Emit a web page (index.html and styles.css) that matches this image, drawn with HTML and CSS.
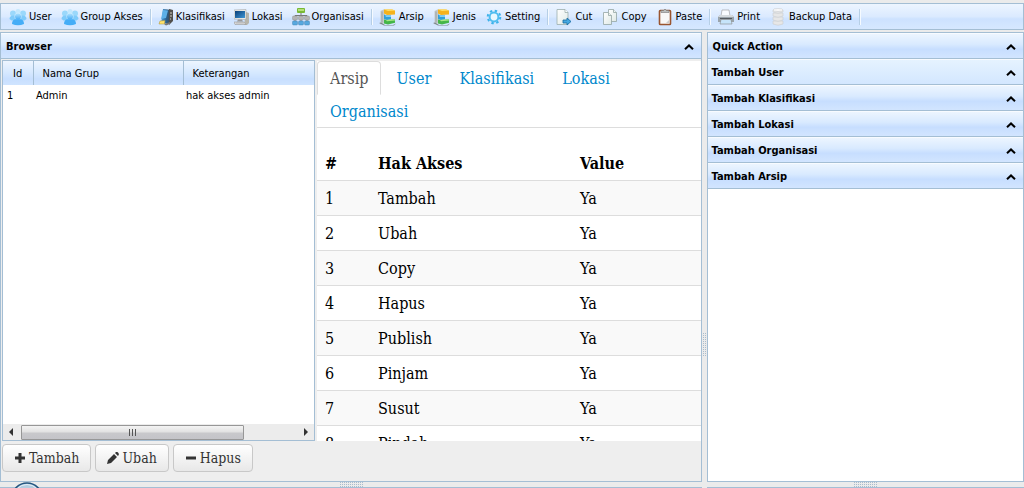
FILE: index.html
```html
<!DOCTYPE html>
<html lang="id">
<head>
<meta charset="utf-8">
<title>Group Akses</title>
<link rel="stylesheet" href="styles.css">
</head>
<body>
<svg class="defs" aria-hidden="true">
  <defs>
    <linearGradient id="gBlue" x1="0" y1="0" x2="0" y2="1"><stop offset="0" stop-color="#b9e6ff"/><stop offset="1" stop-color="#3fa9f5"/></linearGradient>
    <linearGradient id="gSteel" x1="0" y1="0" x2="1" y2="0"><stop offset="0" stop-color="#4ba0dc"/><stop offset=".5" stop-color="#2a5f8e"/><stop offset="1" stop-color="#444"/></linearGradient>
    <linearGradient id="gPage" x1="0" y1="0" x2="1" y2="1"><stop offset="0" stop-color="#fff"/><stop offset="1" stop-color="#dfe9e6"/></linearGradient>
    <linearGradient id="gScreen" x1="0" y1="0" x2="1" y2="1"><stop offset="0" stop-color="#0a3f78"/><stop offset="1" stop-color="#3f97d6"/></linearGradient>
    <symbol id="users" viewBox="0 0 18 18">
      <circle cx="4" cy="5.500" r="3" fill="#9ad8fb"/><circle cx="14" cy="5.500" r="3" fill="#9ad8fb"/><circle cx="9" cy="3.500" r="2.500" fill="#c3e8fd"/>
      <path d="M.5 11q0-3.500 4-3.500h9q4 0 4 3.500l-2 1.500h-13z" fill="#7fcbfa"/>
      <circle cx="9" cy="8.500" r="3.500" fill="url(#gBlue)" stroke="#d9f1ff" stroke-width=".5"/>
      <path d="M3 16q0-4.500 4-4.700h4q4 .2 4 4.700-6 2.500-12 0z" fill="#45adf7"/>
    </symbol>
    <symbol id="cabinet" viewBox="0 0 18 18">
      <path d="M1.500 3l4-2v14l-4 1.500z" fill="#c3cacb"/><path d="M3 3.500v11" stroke="#8f989a" stroke-width=".8"/>
      <path d="M0 15l2-.5 4 2.500h8l3-1.500-2 2H5z" fill="#7f8789"/>
      <path d="M5 1.500h8l3 1v4l-8 .5-3-1.500z" fill="#f5b21c"/><path d="M5 1.500h8l3 1-7 .5z" fill="#ffe066"/>
      <path d="M5 6.500l3 .8h4v4L8 12l-3-1z" fill="#2f9fdb"/><path d="M6 7.500h6v1.200H7z" fill="#9be0fb"/>
      <path d="M5 11.500l3 .5 8-.7v3.500L9 16.500l-4-1z" fill="#45b649"/><path d="M7 12l9-.8v1.300l-8 .8z" fill="#a7e884"/>
    </symbol>
    <symbol id="chevron" viewBox="0 0 10 6"><path d="M1 5.200L5 1.400l4 3.800" fill="none" stroke="#000" stroke-width="2"/></symbol>
  </defs>
</svg>

<nav class="toolbar" aria-label="Toolbar">
  <button type="button"><svg class="icon"><use href="#users"/></svg>User</button>
  <button type="button"><svg class="icon"><use href="#users"/></svg>Group Akses</button>
  <span class="sep"></span>
  <button type="button"><svg class="icon narrow" viewBox="1 0 16 18"><path d="M6 1l9 1-3 13-8 1z" fill="url(#gSteel)"/><path d="M12 1l4 1v11l-4 4z" fill="#51504d"/><path d="M6 2l5 .5L9 10l-5 1z" fill="#5cb0e8"/><path d="M13 5h2M13 8h2M13 11h1" stroke="#d4d0c5"/><path d="M2 16l1-3 5-.5-.5 3.500z" fill="#ffe36e" stroke="#a88d37" stroke-width=".5"/><path d="M7 16l6-2v2l-4 1.500z" fill="#777"/></svg>Klasifikasi</button>
  <button type="button"><svg class="icon narrow" viewBox="1 0 16 18"><path d="M13 4l3 1v10l-2 2h-3z" fill="#b8b6ac"/><path d="M1 2l12-.5v10L1 11z" fill="#eeeee8" stroke="#999" stroke-width=".5"/><path d="M2 3h10v7H2z" fill="url(#gScreen)"/><path d="M5 11.500h4l1 2H4z" fill="#999"/><path d="M1 14h10l2 2.500H2z" fill="#ddd" stroke="#999" stroke-width=".6"/><path d="M3 15h8" stroke="#aaa" stroke-width=".6"/></svg>Lokasi</button>
  <button type="button"><svg class="icon" viewBox="0 0 18 18"><path d="M9 5v3M3 9V7.500h12V9M3 11v3M9 9v5M15 11v3" stroke="#777" fill="none"/><rect x="5" y="0" width="8" height="5" rx="1" fill="#78b935"/><rect x="6" y="1" width="6" height="2" fill="#b5df78"/><g fill="#b4b4b4" stroke="#888" stroke-width=".4"><rect x=".5" y="8" width="5" height="4" rx="1"/><rect x="6.500" y="8" width="5" height="4" rx="1"/><rect x="12.500" y="8" width="5" height="4" rx="1"/></g><g fill="#57a8df" stroke="#3a78a8" stroke-width=".4"><rect x=".5" y="13" width="5" height="4" rx="1"/><rect x="6.500" y="13" width="5" height="4" rx="1"/><rect x="12.500" y="13" width="5" height="4" rx="1"/></g></svg>Organisasi</button>
  <span class="sep"></span>
  <button type="button"><svg class="icon"><use href="#cabinet"/></svg>Arsip</button>
  <button type="button"><svg class="icon"><use href="#cabinet"/></svg>Jenis</button>
  <button type="button"><svg class="icon" viewBox="0 0 18 18"><circle cx="9" cy="9" r="6.300" fill="none" stroke="#3db2ea" stroke-width="2" stroke-dasharray="2.400 2.548"/><circle cx="9" cy="9" r="4.400" fill="#e9f7ff" stroke="#50bdf0" stroke-width="2"/></svg>Setting</button>
  <span class="sep"></span>
  <button type="button"><svg class="icon" viewBox="0 0 18 18"><path d="M2 1.500h8l3 3v12H2z" fill="url(#gPage)" stroke="#9caead" stroke-width=".8"/><path d="M10 1.500v3h3" fill="#fff" stroke="#9caead" stroke-width=".8"/><path d="M8 12h4v-2l4 3.500-4 3.500v-2H8z" fill="#45a8e2" stroke="#176b9f" stroke-width=".8"/></svg>Cut</button>
  <button type="button"><svg class="icon" viewBox="0 0 18 18"><g fill="url(#gPage)" stroke="#94a6a5" stroke-width=".8"><path d="M7.500 1.500h5l3 3v9h-8z"/><path d="M12.500 1.500v3h3"/><path d="M2.500 4.500h5l3 3v9h-8z"/><path d="M7.500 4.500v3h3"/></g></svg>Copy</button>
  <button type="button"><svg class="icon" viewBox="0 0 18 18"><rect x="3.500" y="2.500" width="11" height="14" rx=".8" fill="#f8f8f7" stroke="#9a552f" stroke-width="1.600"/><path d="M5 4.500V2.500h2.500q1.500-3 3 0H13v2z" fill="#b9bdbc" stroke="#777" stroke-width=".6"/><path d="M13 12v3h-3z" fill="#ccc"/></svg>Paste</button>
  <span class="sep"></span>
  <button type="button"><svg class="icon" viewBox="0 0 18 18"><path d="M5 2h7l1 6H4z" fill="#f9fcff" stroke="#999" stroke-width=".6"/><path d="M3 7h12l2 2v5H1V9z" fill="#9aa4ab"/><path d="M3 7h12l2 2H1z" fill="#d5dadd"/><path d="M3 10.500h12" stroke="#555b5f"/><path d="M4 11.500h10l1 4.500H3z" fill="#c6e4fa" stroke="#888" stroke-width=".6"/></svg>Print</button>
  <button type="button"><svg class="icon" viewBox="0 0 18 18"><g fill="#e7e7e7" stroke="#c9ccd0" stroke-width=".6"><path d="M4 13v3q5 2.500 10 0v-3z"/><path d="M4 9v3q5 2.500 10 0V9z"/><path d="M4 5v3q5 2.500 10 0V5z"/><path d="M4 2v2q5 2.500 10 0V2z"/><ellipse cx="9" cy="2" rx="5" ry="1.500" fill="#f8f8f8"/></g></svg>Backup Data</button>
  <span class="sep"></span>
</nav>

<div class="workspace">
  <div class="column browser-col">
    <section class="panel">
      <header class="bar"><h2>Browser</h2><button type="button" aria-label="Ciutkan Browser"><svg class="chev"><use href="#chevron"/></svg></button></header>
      <div class="browser">
        <div class="group">
          <div class="grid-box">
            <table class="grid">
              <colgroup><col class="g-id"><col class="g-name"><col></colgroup>
              <thead><tr><th>Id</th><th>Nama Grup</th><th>Keterangan</th></tr></thead>
              <tbody><tr><td>1</td><td>Admin</td><td>hak akses admin</td></tr></tbody>
            </table>
            <div class="scroll" aria-hidden="true">
              <svg class="arrow" viewBox="0 0 4 8"><path d="M4 0v8L0 4z" fill="#333"/></svg>
              <div class="track"><div class="thumb"><i></i><i></i><i></i></div></div>
              <svg class="arrow" viewBox="0 0 4 8"><path d="M0 0v8l4-4z" fill="#333"/></svg>
            </div>
          </div>
        </div>
        <div class="access">
          <ul class="tabs">
            <li><a class="active" href="#arsip">Arsip</a></li>
            <li><a href="#user">User</a></li>
            <li><a href="#klasifikasi">Klasifikasi</a></li>
            <li><a href="#lokasi">Lokasi</a></li>
            <li><a href="#organisasi">Organisasi</a></li>
          </ul>
          <table class="rights">
            <colgroup><col class="r-no"><col class="r-name"><col></colgroup>
            <thead><tr><th>#</th><th>Hak Akses</th><th>Value</th></tr></thead>
            <tbody>
              <tr><td>1</td><td>Tambah</td><td>Ya</td></tr>
              <tr><td>2</td><td>Ubah</td><td>Ya</td></tr>
              <tr><td>3</td><td>Copy</td><td>Ya</td></tr>
              <tr><td>4</td><td>Hapus</td><td>Ya</td></tr>
              <tr><td>5</td><td>Publish</td><td>Ya</td></tr>
              <tr><td>6</td><td>Pinjam</td><td>Ya</td></tr>
              <tr><td>7</td><td>Susut</td><td>Ya</td></tr>
              <tr><td>8</td><td>Pindah</td><td>Ya</td></tr>
            </tbody>
          </table>
        </div>
      </div>
      <div class="actions">
        <button type="button"><svg viewBox="0 0 12 12"><path d="M6 1v10M1 6h10" stroke="#333" stroke-width="3"/></svg>Tambah</button>
        <button type="button"><svg viewBox="0 0 12 12"><path d="M0 12l1-4 6-6 3 3-6 6zM8 1l1-1q1-.5 2 .5t.8 2.200L11 4z" fill="#333"/></svg>Ubah</button>
        <button type="button"><svg viewBox="0 0 12 12"><path d="M1 6h10" stroke="#333" stroke-width="3"/></svg>Hapus</button>
      </div>
    </section>
    <div class="split-h"><span class="dots"></span><svg class="orb" viewBox="0 0 32 32"><circle cx="16" cy="16" r="15" fill="#b4cde0" stroke="#24557f" stroke-width="1.500"/><circle cx="16" cy="16" r="13.500" fill="none" stroke="#e4eff7"/></svg></div>
    <div class="next"></div>
  </div>
  <div class="split-v"><span class="dots"></span></div>
  <div class="column quick-col">
    <section class="panel quick">
      <header class="bar"><h2>Quick Action</h2><button type="button" aria-label="Ciutkan Quick Action"><svg class="chev"><use href="#chevron"/></svg></button></header>
      <button type="button" class="bar item first">Tambah User<svg class="chev"><use href="#chevron"/></svg></button>
      <button type="button" class="bar item">Tambah Klasifikasi<svg class="chev"><use href="#chevron"/></svg></button>
      <button type="button" class="bar item">Tambah Lokasi<svg class="chev"><use href="#chevron"/></svg></button>
      <button type="button" class="bar item">Tambah Organisasi<svg class="chev"><use href="#chevron"/></svg></button>
      <button type="button" class="bar item">Tambah Arsip<svg class="chev"><use href="#chevron"/></svg></button>
    </section>
    <div class="split-h"><span class="dots"></span></div>
    <div class="next"></div>
  </div>
</div>
</body>
</html>
```
FILE: styles.css
```css
* { box-sizing: border-box; }

:root {
  --line: #a4bed4;
  --ui: "DejaVu Sans Condensed", "Noto Sans", sans-serif;
  --book: "DejaVu Serif Condensed", "Liberation Serif", serif;
}

body {
  margin: 0;
  padding-top: 3px;
  height: 100vh;
  overflow: hidden;
  display: flex;
  flex-direction: column;
  gap: 2px;
  background: #ebebeb;
  color: #000;
  font: 11px/14px var(--ui);
}

button { margin: 0; border: 0; padding: 0; background: none; color: inherit; font: inherit; }
.defs { position: absolute; width: 0; height: 0; }

.toolbar {
  display: flex;
  align-items: center;
  height: 27px;
  padding-left: 3px;
  border: 1px solid var(--line);
  background: linear-gradient(#edf5ff, #dbeaff 50%, #cde2ff 60%, #d6e8ff);
}
.toolbar button { display: flex; align-items: center; gap: 2px; padding: 0 4px 0 5px; white-space: nowrap; }
.icon { width: 18px; height: 18px; }
.icon.narrow { width: 16px; }
.sep { width: 2px; height: 16px; margin: 0 1px 0 3px; border-left: 1px solid #b6cfe6; border-right: 1px solid #f5faff; }

.workspace { flex: 1; min-height: 0; display: flex; }
.column { display: flex; flex-direction: column; min-width: 0; overflow: hidden; }
.browser-col { flex: 1; }
.quick-col { flex: 0 0 31%; }
.panel {
  flex: 1;
  min-height: 0;
  display: flex;
  flex-direction: column;
  border: 1px solid var(--line);
  background: #eee;
}
.quick { background: #fff; }

.bar {
  flex: none;
  display: flex;
  align-items: center;
  justify-content: space-between;
  height: 26px;
  padding: 2px 7px 0 5px;
  border-bottom: 1px solid var(--line);
  background: linear-gradient(#eef6ff, #d9eaff 45%, #c7deff 65%, #d2e5ff);
  box-shadow: inset 0 1px #f8fbff;
  font-weight: bold;
}
.bar h2 { margin: 0; font-size: 11px; line-height: 14px; }
.bar.item { padding-left: 4px; text-align: left; }
.bar.first { background: linear-gradient(#e6f3ff, #d3e7ff); }
.chev { display: block; width: 10px; height: 6px; }

.browser { flex: 1; min-height: 0; display: flex; gap: 2px; padding: 1px 0 0 1px; }
.group { flex: 0 0 313px; display: flex; }
.grid-box { flex: 1; display: flex; flex-direction: column; justify-content: space-between; border: 1px solid var(--line); background: #fff; }
.grid { width: 100%; border-collapse: collapse; table-layout: fixed; }
.g-id { width: 30px; }
.g-name { width: 150px; }
.grid th {
  height: 24px;
  padding: 2px 9px 0;
  border-right: 1px solid var(--line);
  background: linear-gradient(#edf5ff, #d5e8ff 50%, #c8dfff 75%, #cfe4ff);
  font-weight: normal;
  text-align: left;
}
.grid th:first-child { padding-left: 10px; }
.grid th:last-child { border-right: 0; }
.grid td { height: 22px; padding: 0 4px; }
.grid td + td { padding-left: 3px; }
.scroll { display: flex; align-items: center; gap: 8px; height: 16px; padding: 0 6px; background: #ececec; }
.arrow { width: 4px; height: 8px; }
.track { flex: 1; }
.thumb {
  display: flex;
  align-items: center;
  justify-content: center;
  gap: 2px;
  width: 81%;
  height: 15px;
  border: 1px solid #979797;
  border-radius: 1px;
  background: linear-gradient(#f4f4f4, #e2e2e2 45%, #c8c8cb 55%, #c4c4c8);
}
.thumb i { width: 1px; height: 7px; background: #555; }

.access { flex: 1; min-width: 0; overflow: hidden; margin-top: 1px; background: #fff; font: 16px/18px var(--book); }
.tabs { display: flex; flex-wrap: wrap; margin: 0 0 17px; padding: 0 60px 0 0; border-bottom: 1px solid #ddd; list-style: none; }
.tabs li { margin-bottom: -1px; }
.tabs a {
  display: block;
  height: 34px;
  margin-right: 2px;
  padding: 8px 12px 6px;
  border: 1px solid transparent;
  border-radius: 4px 4px 0 0;
  color: #08c;
  text-decoration: none;
}
.tabs .active { border-color: #ddd #ddd transparent; color: #555; }
.rights { width: 100%; border-collapse: collapse; table-layout: fixed; }
.r-no { width: 53px; }
.r-name { width: 202px; }
.rights th, .rights td { height: 35px; padding: 2px 8px 0; text-align: left; }
.rights th { padding-top: 4px; }
.rights td { border-top: 1px solid #ddd; }
.rights tbody tr:nth-child(odd) { background: #f9f9f9; }

.actions { display: flex; gap: 4px; height: 40px; padding: 3px 1px; }
.actions button {
  display: flex;
  align-items: center;
  gap: 3px;
  height: 28px;
  padding: 0 11px;
  border: 1px solid #c8c8c8;
  border-radius: 4px;
  background: linear-gradient(#fff, #e8e8e8);
  color: #333;
  font: 14px/20px var(--book);
}
.actions svg { width: 12px; height: 12px; }

.split-h { position: relative; display: flex; align-items: center; justify-content: center; height: 5px; }
.split-v { flex: 0 0 5px; display: flex; align-items: center; justify-content: center; padding-top: 170px; }
.dots { background: repeating-conic-gradient(#a9bccd 0 25%, transparent 0 100%) 0 0 / 2px 2px; }
.split-h .dots { width: 24px; height: 5px; }
.split-v .dots { width: 4px; height: 24px; }
.orb { position: absolute; left: 11px; top: 0; width: 32px; height: 32px; z-index: 1; }
.next { flex: none; height: 1px; background: var(--line); }
```
